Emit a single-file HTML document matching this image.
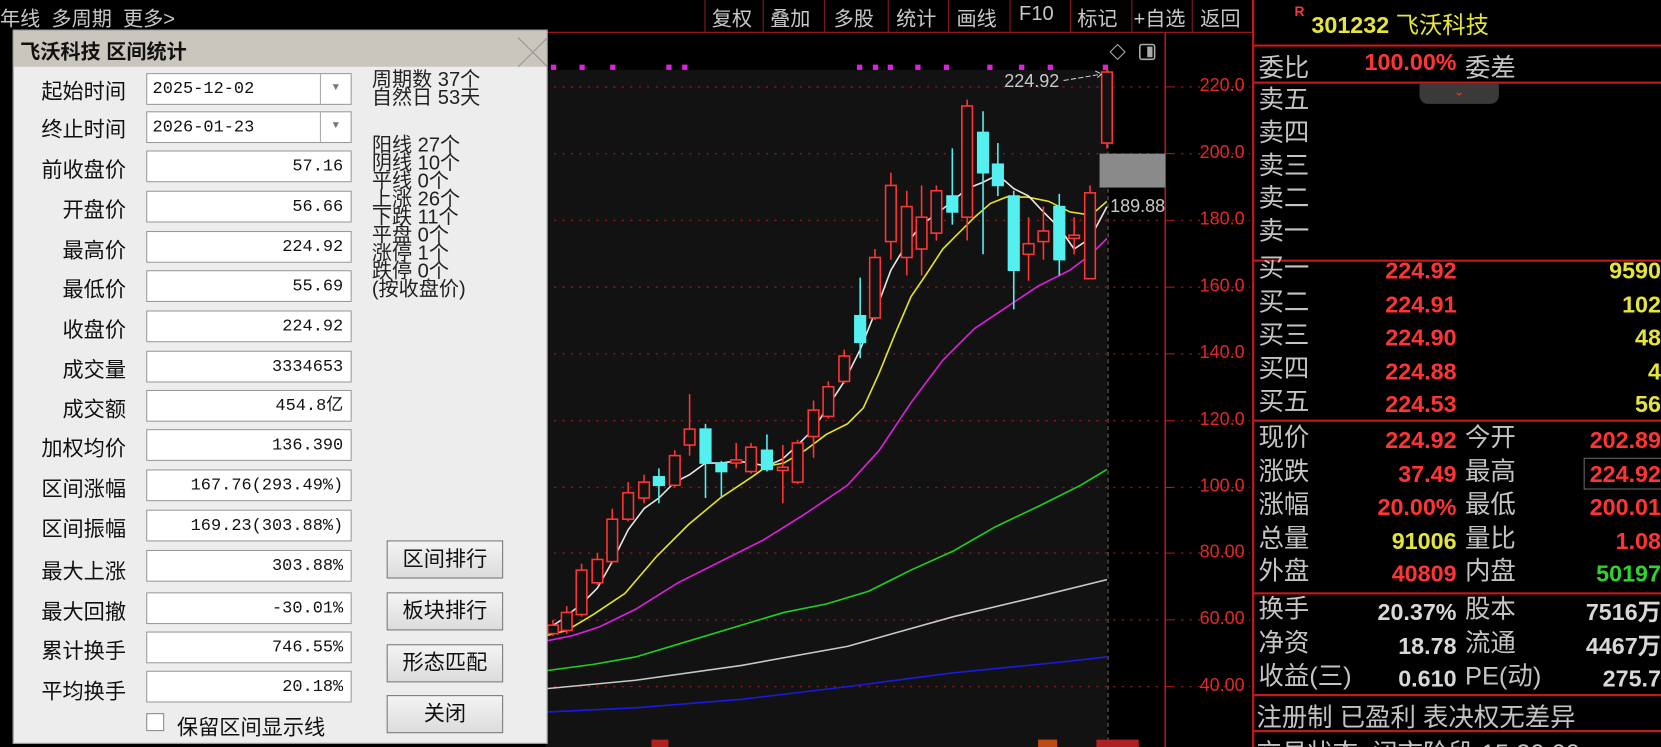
<!DOCTYPE html>
<html><head><meta charset="utf-8"><style>
html,body{margin:0;padding:0;background:#000;overflow:hidden;width:1661px;height:747px}
#w{position:absolute;left:0;top:0;width:1568px;height:705px;transform:scale(1.0593,1.0596);transform-origin:0 0;background:#000;font-family:"Liberation Sans","Noto Sans CJK SC",sans-serif;overflow:hidden}
.a{position:absolute;white-space:nowrap}
.tb{color:#c8c8c8;font-size:19px;top:3px}
.sep{position:absolute;top:0;width:1px;height:30px;background:#8a1c1c}
#dlg{position:absolute;left:12px;top:28px;width:503px;height:672px;background:#ededed;border:1px solid #999}
#tt{position:absolute;left:0;top:0;width:503px;height:34px;background:#cbc6bd}
.lb{position:absolute;font-size:20px;color:#111;text-align:right;width:106px;left:0}
.in{position:absolute;left:125px;width:194px;height:30px;background:#fff;border:1px solid #999;box-sizing:border-box;font-family:"Liberation Mono",monospace;font-size:16px;color:#111;text-align:right;padding-right:7px;line-height:28px}
.bt{position:absolute;left:352px;width:110px;height:36px;box-sizing:border-box;border:1px solid #777;background:linear-gradient(#f4f4f4,#dcdcdc);font-size:20px;color:#111;text-align:center;line-height:34px}
.st{position:absolute;left:338px;font-size:19px;color:#222;line-height:17px}
.rl{position:absolute;left:1183px;width:385px;height:2px;background:#c41a1a}
.g{color:#c4c4c4;font-size:24px}
.r{color:#ff3434;font-weight:bold;font-size:22px}
.y{color:#e6e63a;font-weight:bold;font-size:22px}
.wv{color:#d8d8d8;font-weight:bold;font-size:22px}
.gr{color:#30d230;font-weight:bold;font-size:22px}
.ax{position:absolute;left:1110px;width:65px;text-align:right;color:#e02828;font-size:17px}
</style></head><body><div id="w">

<!-- toolbar -->
<div class="a tb" style="left:0">年线 &nbsp;多周期 &nbsp;更多&gt;</div>
<div class="sep" style="left:665px"></div><div class="sep" style="left:720px"></div><div class="sep" style="left:778px"></div><div class="sep" style="left:838px"></div><div class="sep" style="left:895px"></div><div class="sep" style="left:953px"></div><div class="sep" style="left:1010px"></div><div class="sep" style="left:1068px"></div><div class="sep" style="left:1125px"></div><div class="sep" style="left:1182px"></div>
<div class="a tb" style="left:672px">复权</div><div class="a tb" style="left:727px">叠加</div><div class="a tb" style="left:787px">多股</div><div class="a tb" style="left:846px">统计</div><div class="a tb" style="left:903px">画线</div><div class="a tb" style="left:962px">F10</div><div class="a tb" style="left:1017px">标记</div><div class="a tb" style="left:1070px">+自选</div><div class="a tb" style="left:1133px">返回</div>
<div style="position:absolute;left:515px;top:30px;width:668px;height:1px;background:#b01a1a"></div>

<!-- chart -->
<svg style="position:absolute;left:0;top:0" width="1183" height="705">
<rect x="515" y="66" width="530" height="640" fill="#121212"/>
<g stroke="#8a1a1a" stroke-dasharray="2 6" stroke-width="1.3">
<line x1="515" x2="1180" y1="82" y2="82"/><line x1="515" x2="1180" y1="145" y2="145"/><line x1="515" x2="1180" y1="208" y2="208"/><line x1="515" x2="1180" y1="271" y2="271"/><line x1="515" x2="1180" y1="334" y2="334"/><line x1="515" x2="1180" y1="397" y2="397"/><line x1="515" x2="1180" y1="460" y2="460"/><line x1="515" x2="1180" y1="522" y2="522"/><line x1="515" x2="1180" y1="585" y2="585"/><line x1="515" x2="1180" y1="648" y2="648"/>
</g>
<line x1="1046" x2="1046" y1="66" y2="705" stroke="#7a6a5a" stroke-dasharray="4 3"/>
<line x1="1100" x2="1100" y1="31" y2="705" stroke="#b01a1a" stroke-width="1.5"/>
<g stroke="#b01a1a"><line x1="1100" x2="1107" y1="82" y2="82"/><line x1="1100" x2="1107" y1="145" y2="145"/><line x1="1100" x2="1107" y1="208" y2="208"/><line x1="1100" x2="1107" y1="271" y2="271"/><line x1="1100" x2="1107" y1="334" y2="334"/><line x1="1100" x2="1107" y1="397" y2="397"/><line x1="1100" x2="1107" y1="460" y2="460"/><line x1="1100" x2="1107" y1="522" y2="522"/><line x1="1100" x2="1107" y1="585" y2="585"/><line x1="1100" x2="1107" y1="648" y2="648"/></g>
<g fill="#e020e0"><rect x="520" y="61" width="5" height="5"/><rect x="547" y="61" width="5" height="5"/><rect x="576" y="61" width="5" height="5"/><rect x="629" y="61" width="5" height="5"/><rect x="644" y="61" width="5" height="5"/><rect x="809" y="61" width="5" height="5"/><rect x="824" y="61" width="5" height="5"/><rect x="838" y="61" width="5" height="5"/><rect x="864" y="61" width="5" height="5"/><rect x="891" y="61" width="5" height="5"/><rect x="932" y="61" width="5" height="5"/><rect x="962" y="61" width="5" height="5"/><rect x="989" y="61" width="5" height="5"/><rect x="1041" y="61" width="5" height="5"/></g>
<path d="M1055 42 l7 7 -7 7 -7 -7z" fill="none" stroke="#aaa"/><rect x="1076" y="42" width="14" height="14" rx="2" fill="none" stroke="#aaa" stroke-width="1.5"/><rect x="1083" y="44" width="5" height="10" fill="#aaa"/>
<rect x="1038" y="145" width="62" height="32" fill="#8a8a8a"/>
<!-- MAs -->
<g fill="none" stroke-width="1.5">
<polyline stroke="#1a1ae6" points="515,672 600,668 700,660 800,648 900,635 1000,625 1045,620"/>
<polyline stroke="#c8c8c8" points="515,650 600,642 700,628 800,610 900,582 980,563 1045,547"/>
<polyline stroke="#20d020" points="515,633 560,627 600,620 650,605 700,590 740,578 780,570 820,558 860,538 900,520 940,497 980,478 1020,458 1045,443"/>
<polyline stroke="#e020e0" points="515,605 540,600 565,592 600,575 640,550 680,530 720,510 760,485 800,458 830,425 860,380 890,340 920,310 950,290 980,270 1010,255 1030,240 1045,225"/>
<polyline stroke="#e6e620" points="515,600 535,595 560,580 590,560 620,525 650,495 680,470 710,450 724,440 740,437 760,425 780,410 800,400 815,385 830,352 845,315 860,280 875,258 890,235 905,220 920,205 935,192 950,186 970,186 990,190 1010,200 1030,203 1045,190"/>
<polyline stroke="#e8e8e8" points="515,595 530,585 549,570 564,555 578,530 593,500 608,480 622,470 637,455 651,448 666,437 681,437 695,435 709,437 724,440 739,433 753,420 768,405 782,383 797,360 812,330 826,295 841,255 856,230 870,212 884,202 899,190 913,178 928,172 942,165 957,178 971,185 985,200 1000,215 1014,235 1029,225 1045,195"/>
</g>
<!-- candles -->
<g stroke="#ff3434" stroke-width="1.5" fill="#121212">
<line x1="522" x2="522" y1="585" y2="600"/><rect x="517" y="590" width="10" height="8"/>
<line x1="535" x2="535" y1="572" y2="598"/><rect x="530" y="578" width="10" height="17"/>
<line x1="549" x2="549" y1="532" y2="582"/><rect x="544" y="538" width="10" height="42"/>
<line x1="564" x2="564" y1="522" y2="552"/><rect x="559" y="528" width="10" height="22"/>
<line x1="578" x2="578" y1="480" y2="532"/><rect x="573" y="490" width="10" height="40"/>
<line x1="593" x2="593" y1="455" y2="492"/><rect x="588" y="465" width="10" height="25"/>
<line x1="608" x2="608" y1="448" y2="475"/><rect x="603" y="455" width="10" height="15"/>
<line x1="637" x2="637" y1="425" y2="460"/><rect x="632" y="430" width="10" height="28"/>
<line x1="651" x2="651" y1="372" y2="430"/><rect x="646" y="405" width="10" height="15"/>
<line x1="695" x2="695" y1="418" y2="442"/><rect x="690" y="434" width="10" height="3"/>
<line x1="709" x2="709" y1="418" y2="447"/><rect x="704" y="422" width="10" height="23"/>
<line x1="739" x2="739" y1="420" y2="475"/><rect x="734" y="441" width="10" height="3"/>
<line x1="753" x2="753" y1="415" y2="457"/><rect x="748" y="418" width="10" height="37"/>
<line x1="768" x2="768" y1="378" y2="432"/><rect x="763" y="387" width="10" height="25"/>
<line x1="782" x2="782" y1="360" y2="395"/><rect x="777" y="365" width="10" height="28"/>
<line x1="797" x2="797" y1="330" y2="362"/><rect x="792" y="336" width="10" height="24"/>
<line x1="826" x2="826" y1="235" y2="302"/><rect x="821" y="243" width="10" height="57"/>
<line x1="841" x2="841" y1="163" y2="245"/><rect x="836" y="175" width="10" height="53"/>
<line x1="856" x2="856" y1="180" y2="260"/><rect x="851" y="195" width="10" height="48"/>
<line x1="870" x2="870" y1="175" y2="260"/><rect x="865" y="205" width="10" height="30"/>
<line x1="884" x2="884" y1="175" y2="227"/><rect x="879" y="180" width="10" height="40"/>
<line x1="913" x2="913" y1="94" y2="227"/><rect x="908" y="100" width="10" height="105"/>
<line x1="971" x2="971" y1="205" y2="265"/><rect x="966" y="230" width="10" height="10"/>
<line x1="985" x2="985" y1="195" y2="245"/><rect x="980" y="218" width="10" height="10"/>
<line x1="1014" x2="1014" y1="205" y2="240"/><rect x="1009" y="222" width="10" height="3"/>
<line x1="1029" x2="1029" y1="175" y2="263"/><rect x="1024" y="182" width="10" height="81"/>
<line x1="1045" x2="1045" y1="64" y2="140"/><rect x="1040" y="68" width="10" height="67"/>
</g>
<g stroke="#54f0f0" stroke-width="1.5" fill="#54f0f0">
<line x1="622" x2="622" y1="442" y2="475"/><rect x="617" y="450" width="10" height="8"/>
<line x1="666" x2="666" y1="400" y2="470"/><rect x="661" y="405" width="10" height="32"/>
<line x1="681" x2="681" y1="435" y2="470"/><rect x="676" y="437" width="10" height="8"/>
<line x1="724" x2="724" y1="410" y2="445"/><rect x="719" y="425" width="10" height="18"/>
<line x1="812" x2="812" y1="262" y2="338"/><rect x="807" y="298" width="10" height="25"/>
<line x1="899" x2="899" y1="140" y2="212"/><rect x="894" y="185" width="10" height="15"/>
<line x1="928" x2="928" y1="105" y2="240"/><rect x="923" y="125" width="10" height="38"/>
<line x1="942" x2="942" y1="135" y2="185"/><rect x="937" y="155" width="10" height="20"/>
<line x1="957" x2="957" y1="180" y2="292"/><rect x="952" y="185" width="10" height="70"/>
<line x1="1000" x2="1000" y1="183" y2="260"/><rect x="995" y="195" width="10" height="50"/>
</g>
<text x="948" y="82" fill="#c8c8c8" font-size="17" font-family="Liberation Sans">224.92</text>
<path d="M1004 76 L1040 70 M1034 67 L1040 70 L1035 74" stroke="#c8c8c8" fill="none" stroke-dasharray="5 2"/>
<text x="1048" y="200" fill="#c8c8c8" font-size="17" font-family="Liberation Sans">189.88</text>
<rect x="615" y="698" width="16" height="7" fill="#b02020"/><rect x="980" y="698" width="18" height="7" fill="#c04a10"/><rect x="1035" y="698" width="40" height="7" fill="#b02020"/>
</svg>
<div class="ax" style="top:71px">220.0</div><div class="ax" style="top:134px">200.0</div><div class="ax" style="top:197px">180.0</div><div class="ax" style="top:260px">160.0</div><div class="ax" style="top:323px">140.0</div><div class="ax" style="top:386px">120.0</div><div class="ax" style="top:449px">100.0</div><div class="ax" style="top:511px">80.00</div><div class="ax" style="top:574px">60.00</div><div class="ax" style="top:637px">40.00</div>

<!-- right panel -->
<div style="position:absolute;left:1182px;top:0;width:2px;height:705px;background:#c41a1a"></div>
<div class="a" style="left:1222px;top:3px;color:#ff3434;font-size:13px;font-weight:bold">R</div>
<div class="a" style="left:1238px;top:6px;color:#e6e63a;font-size:22px;font-weight:bold">301232 <span style="font-weight:normal">飞沃科技</span></div>
<div class="rl" style="top:42px"></div>
<div class="a g" style="left:1188px;top:44px">委比</div><div class="a r" style="left:1275px;width:100px;text-align:right;top:46px">100.00%</div><div class="a g" style="left:1383px;top:44px">委差</div>
<div class="rl" style="top:77px"></div>
<div style="position:absolute;left:1340px;top:79px;width:75px;height:19px;background:#3a3a3a;border-radius:0 0 8px 8px;color:#ff3434;font-size:12px;text-align:center;line-height:14px">⌄</div>
<div class="a g" style="left:1188px;top:79px;line-height:31px">卖五<br>卖四<br>卖三<br>卖二<br>卖一</div>
<div class="rl" style="top:245px"></div>
<div class="a g" style="left:1188px;top:238px;line-height:31.5px">买一<br>买二<br>买三<br>买四<br>买五</div>
<div class="a r" style="left:1275px;width:100px;text-align:right;top:240px;line-height:31.5px">224.92<br>224.91<br>224.90<br>224.88<br>224.53</div>
<div class="a y" style="left:1468px;width:100px;text-align:right;top:240px;line-height:31.5px">9590<br>102<br>48<br>4<br>56</div>
<div class="rl" style="top:396px"></div>
<div class="a g" style="left:1188px;top:398px;line-height:31.5px">现价<br>涨跌<br>涨幅<br>总量<br>外盘</div>
<div class="a" style="left:1275px;width:100px;text-align:right;top:400px;line-height:31.5px;font-weight:bold;font-size:22px"><span style="color:#ff3434">224.92</span><br><span style="color:#ff3434">37.49</span><br><span style="color:#ff3434">20.00%</span><br><span style="color:#e6e63a">91006</span><br><span style="color:#ff3434">40809</span></div>
<div class="a g" style="left:1383px;top:398px;line-height:31.5px">今开<br>最高<br>最低<br>量比<br>内盘</div>
<div class="a" style="left:1468px;width:100px;text-align:right;top:400px;line-height:31.5px;font-weight:bold;font-size:22px"><span style="color:#ff3434">202.89</span><br><span style="color:#ff3434">224.92</span><br><span style="color:#ff3434">200.01</span><br><span style="color:#ff3434">1.08</span><br><span style="color:#30d230">50197</span></div>
<div style="position:absolute;left:1495px;top:432px;width:75px;height:28px;border:1px solid #666"></div>
<div class="rl" style="top:559px"></div>
<div class="a g" style="left:1188px;top:560px;line-height:31.5px">换手<br>净资<br>收益(三)</div>
<div class="a wv" style="left:1275px;width:100px;text-align:right;top:562px;line-height:31.5px">20.37%<br>18.78<br>0.610</div>
<div class="a g" style="left:1383px;top:560px;line-height:31.5px">股本<br>流通<br>PE(动)</div>
<div class="a wv" style="left:1468px;width:100px;text-align:right;top:562px;line-height:31.5px">7516万<br>4467万<br>275.7</div>
<div class="rl" style="top:655px"></div>
<div class="a g" style="left:1186px;top:657px">注册制 已盈利 表决权无差异</div>
<div class="rl" style="top:689px"></div>
<div class="a g" style="left:1186px;top:691px">交易状态: 闭市阶段 15:30:00</div>

<!-- dialog -->
<div id="dlg">
<div id="tt"><div class="a" style="left:6px;top:5px;font-size:19px;font-weight:bold;color:#111">飞沃科技 区间统计</div>
<div class="a" style="left:476px;top:0px;font-size:28px;color:#999;font-weight:100">╳</div></div>
<div class="lb" style="top:41px">起始时间</div><div class="in" style="top:40px;text-align:left;padding-left:5px">2025-12-02<span style="position:absolute;right:0;top:0;width:28px;height:28px;border-left:1px solid #aaa;color:#777;font-size:10px;text-align:center">▼</span></div>
<div class="lb" style="top:77px">终止时间</div><div class="in" style="top:76px;text-align:left;padding-left:5px">2026-01-23<span style="position:absolute;right:0;top:0;width:28px;height:28px;border-left:1px solid #aaa;color:#777;font-size:10px;text-align:center">▼</span></div>
<div class="lb" style="top:115px">前收盘价</div><div class="in" style="top:113px">57.16</div>
<div class="lb" style="top:153px">开盘价</div><div class="in" style="top:151px">56.66</div>
<div class="lb" style="top:191px">最高价</div><div class="in" style="top:189px">224.92</div>
<div class="lb" style="top:228px">最低价</div><div class="in" style="top:226px">55.69</div>
<div class="lb" style="top:266px">收盘价</div><div class="in" style="top:264px">224.92</div>
<div class="lb" style="top:304px">成交量</div><div class="in" style="top:302px">3334653</div>
<div class="lb" style="top:341px">成交额</div><div class="in" style="top:339px">454.8亿</div>
<div class="lb" style="top:378px">加权均价</div><div class="in" style="top:376px">136.390</div>
<div class="lb" style="top:416px">区间涨幅</div><div class="in" style="top:414px">167.76(293.49%)</div>
<div class="lb" style="top:454px">区间振幅</div><div class="in" style="top:452px">169.23(303.88%)</div>
<div class="lb" style="top:494px">最大上涨</div><div class="in" style="top:490px">303.88%</div>
<div class="lb" style="top:532px">最大回撤</div><div class="in" style="top:530px">-30.01%</div>
<div class="lb" style="top:569px">累计换手</div><div class="in" style="top:567px">746.55%</div>
<div class="lb" style="top:607px">平均换手</div><div class="in" style="top:604px">20.18%</div>
<div style="position:absolute;left:125px;top:644px;width:17px;height:17px;background:#fff;border:1px solid #888;box-sizing:border-box"></div>
<div class="a" style="left:154px;top:641px;font-size:20px;color:#111">保留区间显示线</div>
<div class="st" style="top:38px">周期数 37个<br>自然日 53天</div>
<div class="st" style="top:100px">阳线 27个<br>阴线 10个<br>平线 0个<br>上涨 26个<br>下跌 11个<br>平盘 0个<br>涨停 1个<br>跌停 0个<br>(按收盘价)</div>
<div class="bt" style="top:481px">区间排行</div>
<div class="bt" style="top:530px">板块排行</div>
<div class="bt" style="top:579px">形态匹配</div>
<div class="bt" style="top:627px">关闭</div>
</div>
</div></body></html>
